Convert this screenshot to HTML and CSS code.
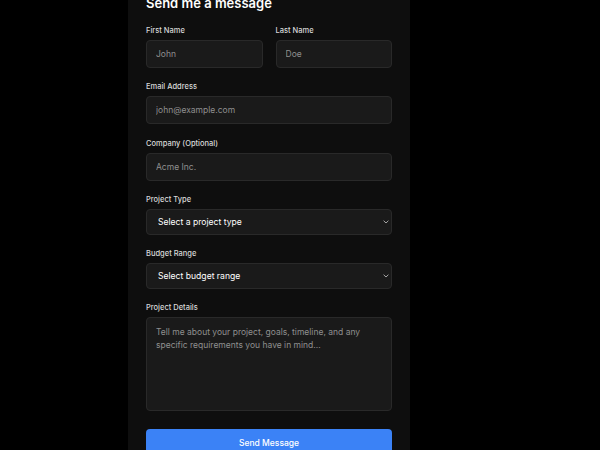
FILE: index.html
```
<!DOCTYPE html>
<html lang="en">
<head>
  <meta charset="UTF-8" />
  <meta name="viewport" content="width=device-width, initial-scale=1.0"/>
  <title>Contact</title>
  <link rel="stylesheet" href="styles.css">
</head>
<body>

<div class="contact-card">
  <h2 class="form-title">Send me a message</h2>

  <form class="contact-form">
    <div class="name-row">
      <div class="field">
        <label for="first">First Name</label>
        <input id="first" type="text" placeholder="John" />
      </div>
      <div class="field">
        <label for="last">Last Name</label>
        <input id="last" type="text" placeholder="Doe" />
      </div>
    </div>

    <div class="field">
      <label for="email">Email Address</label>
      <input id="email" type="email" placeholder="john@example.com" />
    </div>

    <div class="field">
      <label for="company">Company (Optional)</label>
      <input id="company" type="text" placeholder="Acme Inc." />
    </div>

    <div class="field">
      <label for="ptype">Project Type</label>
      <div class="select-wrap">
        <select id="ptype">
          <option>Select a project type</option>
          <option>Website</option>
          <option>Web App</option>
          <option>Mobile App</option>
        </select>
        <svg class="chevron" width="6" height="4" viewBox="0 0 6 4"><path d="M0.6 0.7 L3 3 L5.4 0.7" fill="none" stroke="#b5b5b5" stroke-width="0.9"/></svg>
      </div>
    </div>

    <div class="field">
      <label for="budget">Budget Range</label>
      <div class="select-wrap">
        <select id="budget">
          <option>Select budget range</option>
          <option>$1k - $5k</option>
          <option>$5k - $10k</option>
          <option>$10k+</option>
        </select>
        <svg class="chevron" width="6" height="4" viewBox="0 0 6 4"><path d="M0.6 0.7 L3 3 L5.4 0.7" fill="none" stroke="#b5b5b5" stroke-width="0.9"/></svg>
      </div>
    </div>

    <div class="field">
      <label for="details">Project Details</label>
      <textarea id="details" placeholder="Tell me about your project, goals, timeline, and any specific requirements you have in mind..."></textarea>
    </div>

    <button type="submit" class="send-btn">Send Message</button>
  </form>
</div>

</body>
</html>
```

FILE: styles.css
```
* { box-sizing: border-box; margin: 0; padding: 0; }
body {
  background-color: #000;
  font-family: Inter, "Noto Sans", sans-serif;
  color: #fff;
  min-height: 100vh;
}
.contact-card {
  background-color: #0e0e0e;
  width: 282px;
  margin-left: 128px;
  margin-top: -7px;
  padding: 0 18px 30px;
  min-height: 470px;
}
.form-title {
  font-size: 13px;
  font-weight: 600;
  line-height: 20px;
  color: #fff;
}
.contact-form {
  display: flex;
  flex-direction: column;
  gap: 13.3px;
  margin-top: 12px;
}
.name-row {
  display: grid;
  grid-template-columns: 1fr 1fr;
  gap: 13px;
}
.field {
  display: flex;
  flex-direction: column;
  gap: 4px;
}
.field label {
  font-size: 7.5px;
  line-height: 11px;
  padding-top: 1px;
  font-weight: 500;
  color: #d8d8d8;
  margin-top: -1px;
}
.field input, .field select, .field textarea {
  width: 100%;
  background: #1a1a1a;
  border: 1px solid #292929;
  border-radius: 4px;
  color: #fff;
  font-family: inherit;
  font-size: 8.5px;
  outline: none;
}
.field input {
  height: 28px;
  padding: 0 9px;
}
.field input::placeholder, .field textarea::placeholder {
  color: #8f8f8f;
}
.select-wrap {
  position: relative;
}
.field select {
  appearance: none;
  height: 26px;
  padding: 0 11px;
  font-size: 8.6px;
  font-weight: 400;
}
.chevron {
  position: absolute;
  right: 3px;
  top: 11px;
}
.field textarea {
  height: 94px;
  padding: 8px 9px;
  line-height: 13px;
  resize: none;
}
.send-btn {
  margin-top: 4px;
  height: 28px;
  background: #3b82f6;
  border: none;
  border-radius: 4px;
  color: #fff;
  font-family: inherit;
  font-size: 8.5px;
  font-weight: 500;
  cursor: pointer;
}
```
